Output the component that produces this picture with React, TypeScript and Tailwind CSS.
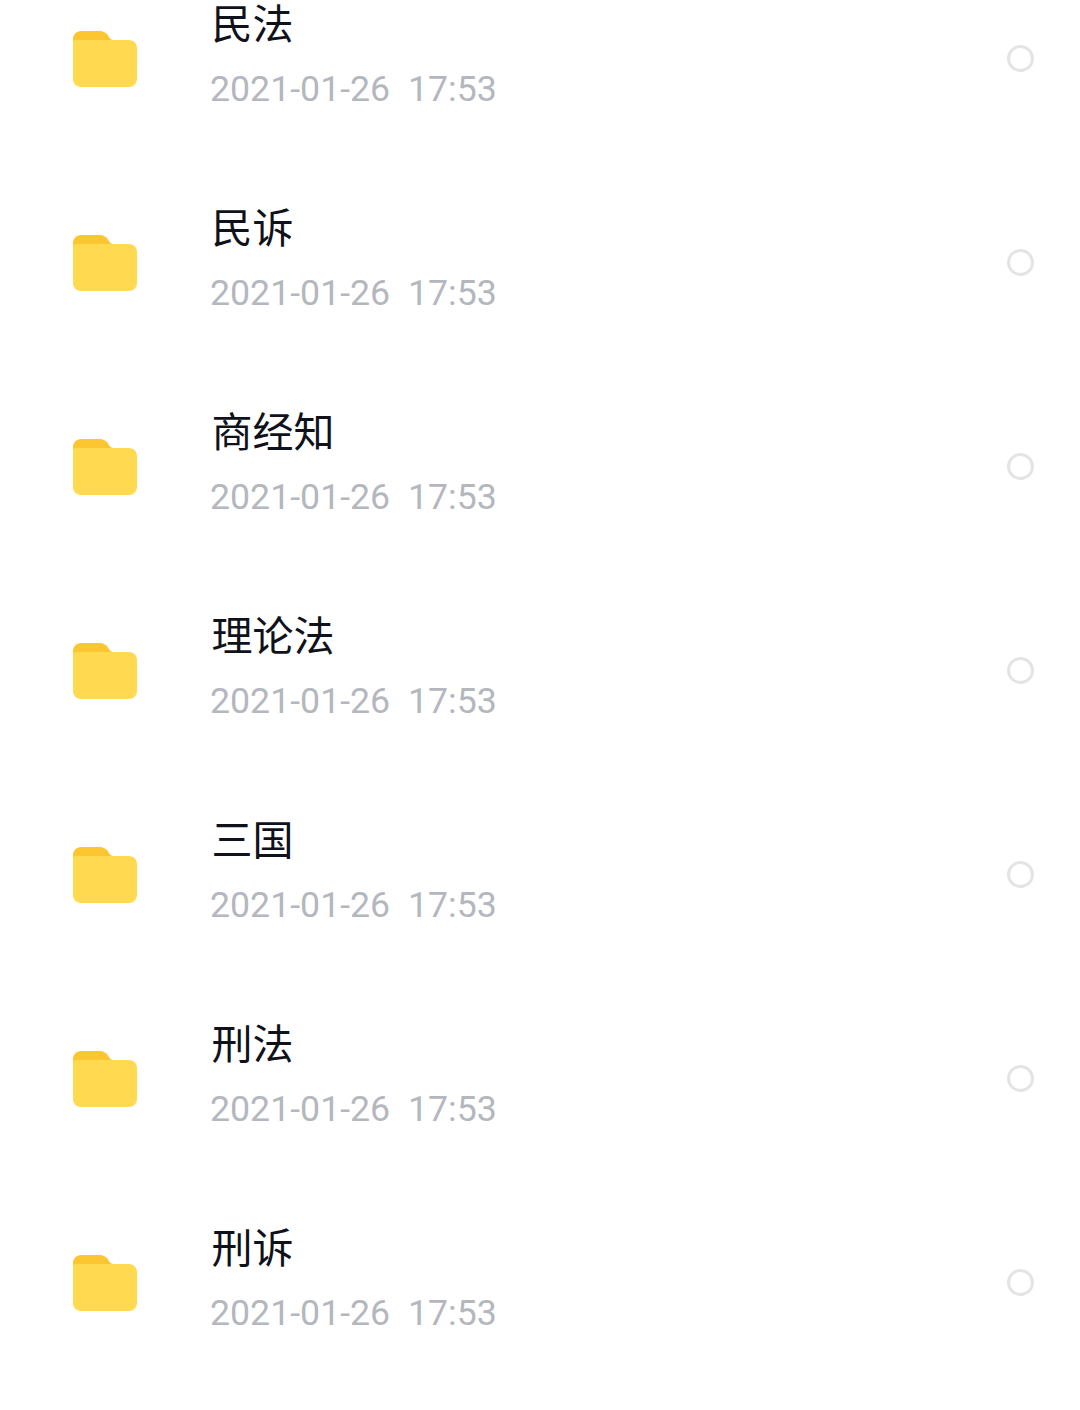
const folders = ["民法", "民诉", "商经知", "理论法", "三国", "刑法", "刑诉"];

const FolderIcon = () => (
  <svg width="64" height="56" viewBox="0 0 64 56" className="mt-[2px] shrink-0">
    <path d="M0 8C0 3.6 3.6 0 8 0H26C30.5 0 33 1.5 35 4.5C36.8 7.5 38 9 41 9V14H0Z" fill="#fcc631" />
    <path d="M0 12C0 10.3 1.3 9 3 9H56C60.4 9 64 12.6 64 17V48C64 52.4 60.4 56 56 56H8C3.6 56 0 52.4 0 48Z" fill="#ffd950" />
  </svg>
);

const FolderRow = ({ name }: { name: string }) => (
  <div className="flex h-[204px] items-center pl-[73px] pr-[46px]">
    <FolderIcon />
    <div className="ml-[73px] flex-1 min-w-0 pb-[9px]">
      <div className="h-[48px] pl-[1.5px] text-[41px] leading-[48px] text-[#0f121a] font-['Noto_Sans_CJK_SC',sans-serif]">{name}</div>
      <div className="mt-[23px] h-[42px] whitespace-pre text-[35.7px] leading-[42px] text-[#b4b7bd] font-['Roboto',sans-serif]">2021-01-26  17:53</div>
    </div>
    <div className="h-[27px] w-[27px] shrink-0 rounded-full border-[3px] border-[#e4e4e4]" />
  </div>
);

export default function App() {
  return (
    <div className="h-[1410px] w-[1080px] overflow-hidden bg-white">
      <div className="-mt-[44px]">
        {folders.map((name) => (
          <FolderRow key={name} name={name} />
        ))}
      </div>
    </div>
  );
}
